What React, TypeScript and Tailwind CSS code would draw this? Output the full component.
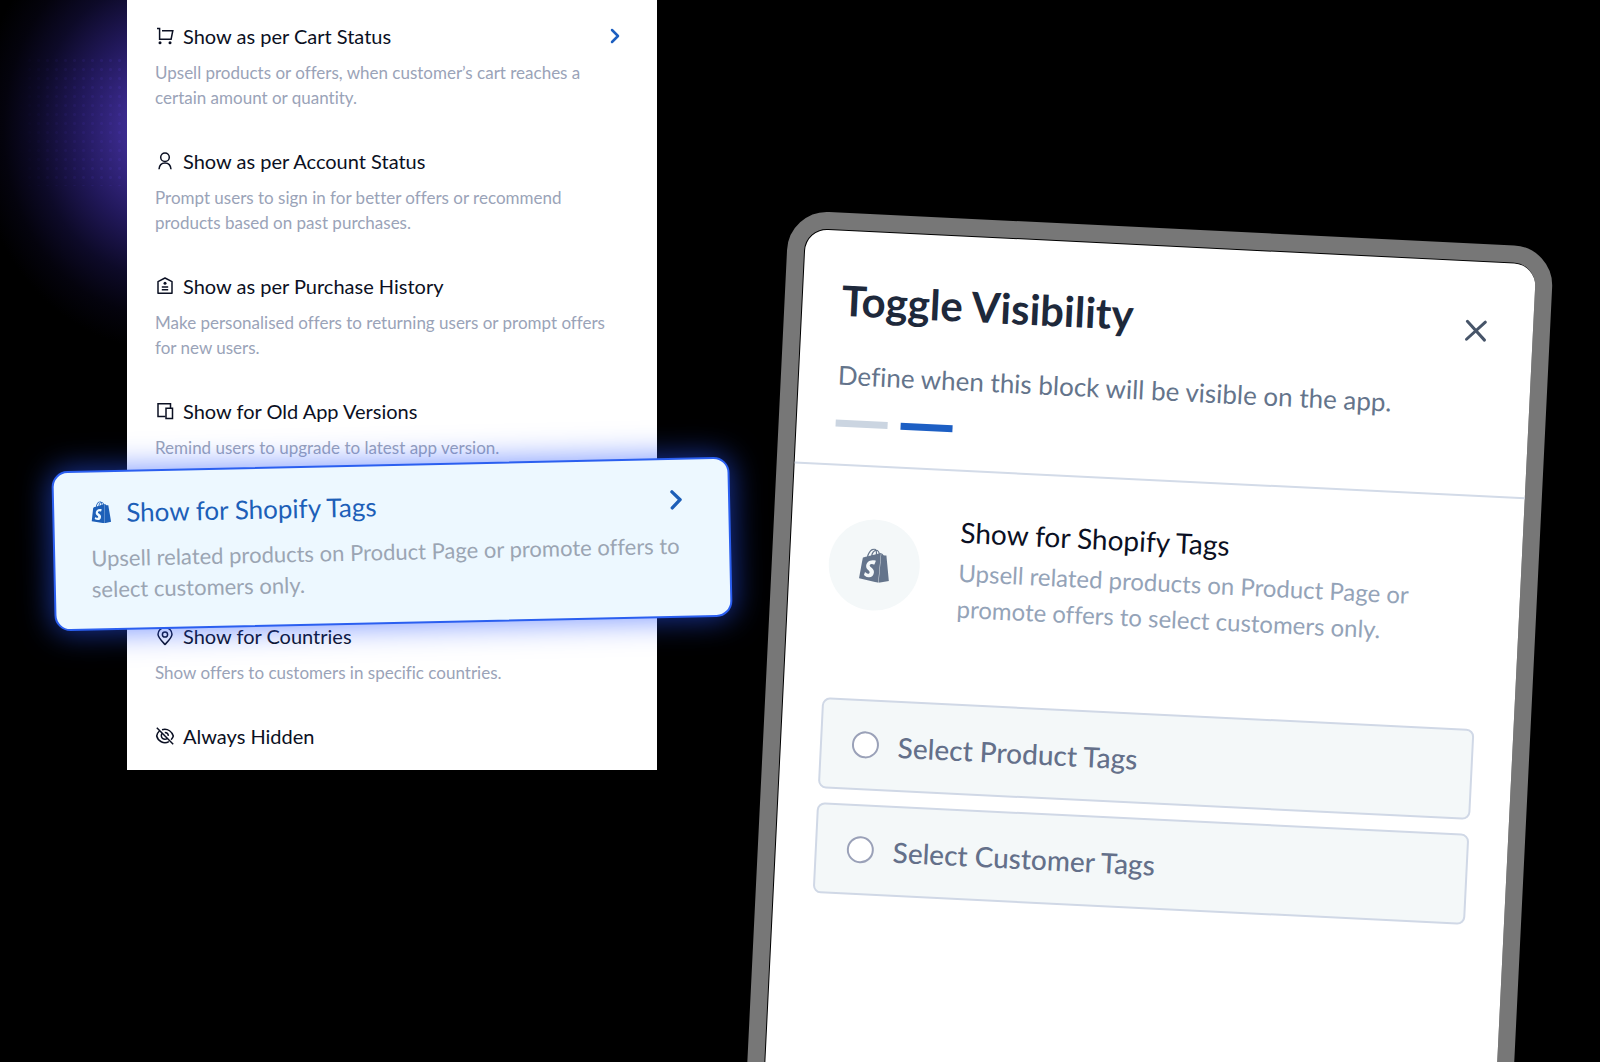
import React, { useState } from 'react';
import { ChevronRight, X } from 'lucide-react';
import { SiShopify } from 'react-icons/si';

interface Rule {
  title: string;
  description?: string;
  icon: React.ReactNode;
  active?: boolean;
}

const Icon: React.FC<{ children: React.ReactNode }> = ({ children }) => (
  <svg viewBox="0 0 20 20" className="h-5 w-5 shrink-0" fill="none" stroke="currentColor" strokeWidth="1.5" aria-hidden="true">
    {children}
  </svg>
);

const RULES: Rule[] = [
  {
    title: 'Show as per Cart Status',
    description: 'Upsell products or offers, when customer’s cart reaches a certain amount or quantity.',
    active: true,
    icon: (
      <Icon>
        <path d="M2 2.500h2.600v10.700h11.500l1.700-8.500H7" />
        <circle cx="5" cy="16.800" r="1.500" fill="currentColor" stroke="none" />
        <circle cx="15" cy="16.800" r="1.500" fill="currentColor" stroke="none" />
      </Icon>
    ),
  },
  {
    title: 'Show as per Account Status',
    description: 'Prompt users to sign in for better offers or recommend products based on past purchases.',
    icon: (
      <Icon>
        <circle cx="10" cy="6.200" r="4.300" />
        <path d="M4 18.300c.3-4 2.500-6.300 6-6.300s5.700 2.300 6 6.300" />
      </Icon>
    ),
  },
  {
    title: 'Show as per Purchase History',
    description: 'Make personalised offers to returning users or prompt offers for new users.',
    icon: (
      <Icon>
        <path d="M3 17.200V5.600L10 2l7 3.600v11.600z" strokeLinejoin="round" />
        <circle cx="10" cy="7.300" r="1.500" fill="currentColor" stroke="none" />
        <path d="M6.800 11h6.400M6.800 13.800h6.400" />
      </Icon>
    ),
  },
  {
    title: 'Show for Old App Versions',
    description: 'Remind users to upgrade to latest app version.',
    icon: (
      <Icon>
        <path d="M10.500 15.500H3V2.800h12.500v4.500" />
        <path d="M11 7.300h6.500v10.200H11z" />
      </Icon>
    ),
  },
];

const MORE_RULES: Rule[] = [
  {
    title: 'Show for Countries',
    description: 'Show offers to customers in specific countries.',
    icon: (
      <Icon>
        <path d="M10 18.500c-4-4.300-7-7.200-7-10.300a7 6.700 0 0 1 14 0c0 3.100-3 6-7 10.300z" strokeLinejoin="round" />
        <circle cx="10" cy="8.500" r="2.600" />
      </Icon>
    ),
  },
  {
    title: 'Always Hidden',
    icon: (
      <Icon>
        <path d="M1.800 1.800l16.400 16.400M7 3.700c6-1.900 10.400 2.600 11.300 6.300-.4 1.500-1.100 2.700-2.200 3.800M4.200 5.300C2.800 6.500 2 8.300 1.700 10c1.200 4.800 6.800 8.700 12.200 5.700" />
        <path d="M7.300 7.300c-1.500 1.700-1.200 3.900.2 5.100 1.500 1.200 3.500 1.100 5-.2M9.800 6.500c2 0 3.400 1.400 3.600 3.300" />
      </Icon>
    ),
  },
];

const TAG_OPTIONS = [
  { value: 'product', label: 'Select Product Tags' },
  { value: 'customer', label: 'Select Customer Tags' },
];

const RuleItem: React.FC<{ rule: Rule }> = ({ rule }) => (
  <li>
    <button type="button" className="block w-full text-left">
      <span className="flex h-7 items-center gap-2 text-[20px] leading-7 text-[#0b1023]">
        {rule.icon}
        <span className="flex-1">{rule.title}</span>
        {rule.active && <ChevronRight className="mr-0.5 h-6 w-6 text-[#1d5fc0]" strokeWidth={2.5} />}
      </span>
      {rule.description && (
        <span className="mt-[10px] block text-[17px] leading-[25px] text-[#9aa3b8]">{rule.description}</span>
      )}
    </button>
  </li>
);

const HighlightedRule: React.FC = () => (
  <li className="relative h-[88px]">
    <button
      type="button"
      className="absolute -inset-x-[102px] -top-[33px] flex h-[160px] -rotate-[1.25deg] flex-col justify-start rounded-2xl border-2 border-[#2b5ff0] bg-[#edf8ff] px-[36px] pt-[24px] text-left shadow-[0_0_30px_2px_rgba(40,85,255,0.6)]"
    >
      <span className="flex h-8 w-full items-center gap-[14px] text-[26px] text-[#1d5fb8]">
        <SiShopify className="h-[22px] w-[22px]" />
        <span className="flex-1">Show for Shopify Tags</span>
        <ChevronRight className="h-8 w-8" strokeWidth={2.5} />
      </span>
      <span className="mt-[14px] block text-[22px] leading-[31px] text-[#9ba5b3]">
        Upsell related products on Product Page or promote offers to select customers only.
      </span>
    </button>
  </li>
);

const VisibilityModal: React.FC = () => {
  const [selected, setSelected] = useState('');

  return (
    <section className="-mb-[200px] ml-[132px] mt-[210px] flex-1 origin-top-left rotate-[2.8deg] rounded-[40px] border-[17px] border-[#777] bg-black pl-px pt-px">
      <div className="h-full rounded-t-[22px] bg-white">
        <header className="border-b-2 border-[#d3dbe8] px-[39px] pb-[37px] pt-[44px]">
          <div className="flex items-center justify-between">
            <h1 className="text-[42px] font-bold leading-[50px] text-[#1e293b]">Toggle Visibility</h1>
            <button type="button" aria-label="Close">
              <X className="h-9 w-9 text-[#475569]" strokeWidth={2} />
            </button>
          </div>
          <p className="mt-[32px] text-[26px] leading-[36px] text-[#64748b]">
            Define when this block will be visible on the app.
          </p>
          <div className="mt-[27px] flex gap-[13px]">
            <span className="h-[7px] w-[52px] bg-[#cbd5e1]" />
            <span className="h-[7px] w-[52px] bg-[#1d5fc4]" />
          </div>
        </header>

        <div className="px-[39px] pt-[36px]">
          <div className="flex gap-[39px]">
            <span className="mt-4 flex h-[91px] w-[91px] shrink-0 items-center justify-center rounded-full bg-[#f4f8f9]">
              <SiShopify className="h-[34px] w-[34px] text-[#64748b]" />
            </span>
            <div>
              <h2 className="mt-[6px] text-[28px] leading-[36px] text-[#0b1023]">Show for Shopify Tags</h2>
              <p className="mt-[5px] text-[24px] leading-[36px] text-[#94a3b8]">
                Upsell related products on Product Page or
                promote offers to select customers only.
              </p>
            </div>
          </div>

          <div className="mt-[77px] flex flex-col gap-[14px]">
            {TAG_OPTIONS.map(option => (
              <label
                key={option.value}
                className="flex h-[91px] items-center gap-[19px] rounded-lg border-2 border-[#d0d8e6] bg-[#f4f8f9] px-[30px] text-[28px] font-medium text-[#64708a]"
              >
                <input
                  type="radio"
                  name="tag-type"
                  value={option.value}
                  checked={selected === option.value}
                  onChange={e => setSelected(e.target.value)}
                  className="h-[27px] w-[27px] appearance-none rounded-full border-2 border-[#9aa1b8] bg-white checked:border-8 checked:border-[#1d5fc4]"
                />
                {option.label}
              </label>
            ))}
          </div>
        </div>
      </div>
    </section>
  );
};

const App: React.FC = () => (
  <main className="relative flex h-screen items-stretch overflow-hidden bg-black pl-[127px] pr-[45px] font-['Lato',sans-serif] [font-variant-ligatures:none]">
    {/* Purple glow with its dotted grid */}
    <div className="absolute left-0 top-0 h-[360px] w-[320px] bg-[radial-gradient(ellipse_190px_220px_at_165px_130px,#432fa6_0,#3a2a8c_22%,#21185a_46%,#0d0a28_68%,#04030d_85%,#000_100%)]" />
    <div className="absolute left-4 top-14 h-[130px] w-[110px] bg-[radial-gradient(#5038c0_1px,transparent_2px)] bg-[length:9px_9px] opacity-20 [mask-image:linear-gradient(to_right,transparent,black)]" />

    <div className="relative z-10 w-[530px] shrink-0">
      <ul className="flex flex-col gap-[37px] bg-white px-7 pb-5 pt-[22px]">
        {RULES.map(rule => <RuleItem key={rule.title} rule={rule} />)}
        <HighlightedRule />
        {MORE_RULES.map(rule => <RuleItem key={rule.title} rule={rule} />)}
      </ul>
    </div>

    <VisibilityModal />
  </main>
);

export default App;
